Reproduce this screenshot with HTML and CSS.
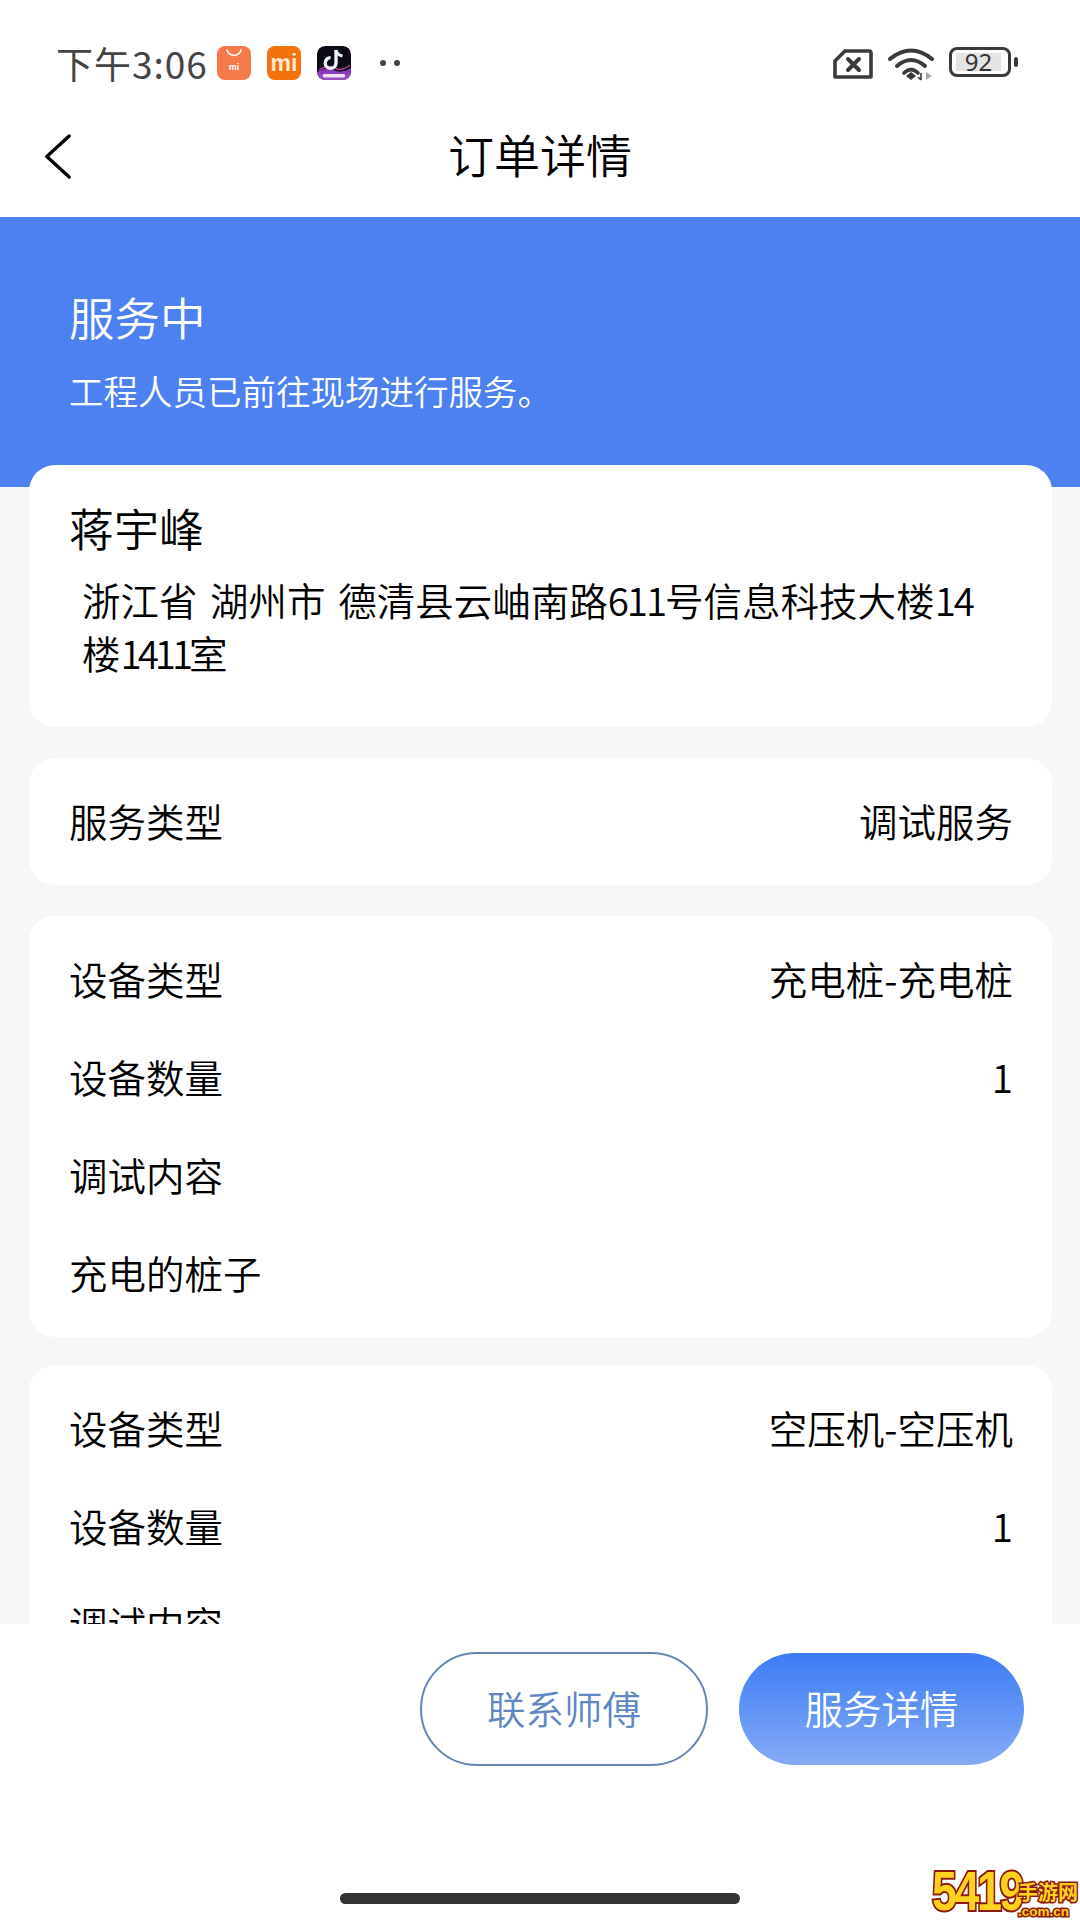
FILE: index.html
```html
<!DOCTYPE html>
<html lang="zh-CN">
<head>
<meta charset="utf-8">
<title>订单详情</title>
<link rel="stylesheet" href="styles.css">
</head>
<body>
<div class="page">
  <header class="statusbar">
    <div class="status-left">
      <span class="time">下午3:06</span>
      <div class="apps">
        <div class="app app-store">
          <svg class="store-arc" viewBox="0 0 16 8"><path d="M1 1 C3 8 13 8 15 1" fill="none" stroke="#fff" stroke-width="1.5" stroke-linecap="round"/></svg>
          <span class="store-mi">mi</span>
        </div>
        <div class="app app-mi"><span>mi</span></div>
        <svg class="app" viewBox="0 0 34 34">
          <defs><linearGradient id="tk" x1="0" y1="0" x2="0" y2="1"><stop offset="0" stop-color="#7b2fb8"/><stop offset="1" stop-color="#a04ec0"/></linearGradient></defs>
          <rect width="34" height="34" rx="8" fill="#0c0b16"/>
          <path d="M0 26 Q10 20 17 24 T34 22 V26 Q34 34 26 34 H8 Q0 34 0 26Z" fill="url(#tk)"/>
          <path d="M2 24 Q12 18 18 22 T33 19" fill="none" stroke="#d23aa8" stroke-width="1.2"/>
          <path d="M19 4 V17 A5.4 5.4 0 1 1 13.6 11.6" fill="none" stroke="#e8f4f4" stroke-width="3.4"/>
          <path d="M19 4 Q20 9 25.5 10" fill="none" stroke="#e8f4f4" stroke-width="3"/>
          <rect x="6" y="28" width="22" height="3.4" rx="1.2" fill="#efe2f5"/>
        </svg>
      </div>
      <div class="dots"><i></i><i></i></div>
    </div>
    <div class="status-right">
      <svg class="ic-sim" viewBox="0 0 40 30"><path d="M2 28 V12 L12 2 H36 Q38 2 38 4 V28 Z" fill="none" stroke="#3a3a3a" stroke-width="3.6" stroke-linejoin="round"/><path d="M15 10 L26 21 M26 10 L15 21" stroke="#3a3a3a" stroke-width="4" stroke-linecap="round"/></svg>
      <svg class="ic-wifi" viewBox="0 0 46 34"><g fill="none" stroke="#3a3a3a" stroke-width="4" stroke-linecap="round"><path d="M2 12 Q23 -5 44 12"/><path d="M9 19 Q23 7 37 19"/><path d="M16 26 Q23 19 30 26" stroke-width="3.6"/></g><path d="M18 29 L23 25 L28 29 L23 33Z" fill="#3a3a3a"/><path d="M33 26 V33 M33 33 L30 30" stroke="#3a3a3a" stroke-width="1.6" fill="none"/><path d="M38 25 V33 L44 29Z" fill="#a9a9a9"/></svg>
      <div class="battery">
        <div class="battery-body"><span class="battery-level">92</span></div>
        <i class="battery-nub"></i>
      </div>
    </div>
  </header>

  <nav class="navbar">
    <svg class="back" viewBox="0 0 30 48"><path d="M27 2 L3 24 L27 46" fill="none" stroke="#000" stroke-width="3.6" stroke-linecap="round" stroke-linejoin="round"/></svg>
    <h1 class="nav-title">订单详情</h1>
  </nav>

  <main class="content">
    <section class="hero">
      <h2 class="hero-title">服务中</h2>
      <p class="hero-sub">工程人员已前往现场进行服务。</p>
    </section>
    <div class="cards">
      <section class="card card-address">
        <div class="name">蒋宇峰</div>
        <p class="address">浙江省 湖州市 德清县云岫南路<span class="num">611</span>号信息科技大楼<span class="num">14</span>楼<span class="num-tight">1411</span>室</p>
      </section>
      <section class="card card-rows">
        <div class="row"><span>服务类型</span><span>调试服务</span></div>
      </section>
      <section class="card card-rows">
        <div class="row"><span>设备类型</span><span>充电桩-充电桩</span></div>
        <div class="row"><span>设备数量</span><span>1</span></div>
        <div class="row"><span>调试内容</span></div>
        <div class="row row-note"><span>充电的桩子</span></div>
      </section>
      <section class="card card-rows card-last">
        <div class="row"><span>设备类型</span><span>空压机-空压机</span></div>
        <div class="row"><span>设备数量</span><span>1</span></div>
        <div class="row"><span>调试内容</span></div>
        <div class="row row-note"><span>空压的机子</span></div>
      </section>
    </div>
  </main>

  <footer class="bottom">
    <div class="actions">
      <button class="btn btn-outline">联系师傅</button>
      <button class="btn btn-fill">服务详情</button>
    </div>
    <div class="home-indicator"></div>
    <div class="watermark">
      <span class="wm-big">5419</span>
      <span class="wm-side"><span class="wm-cn">手游网</span><span class="wm-en">.com.cn</span></span>
    </div>
  </footer>
</div>
</body>
</html>
```
FILE: styles.css
```css
* { box-sizing: border-box; }
html, body { margin: 0; padding: 0; }
body {
  font-family: "Noto Sans CJK SC", "Noto Sans", sans-serif;
  font-weight: 350;
  background: #fff;
  color: #000;
}
.page {
  width: 1080px;
  height: 1920px;
  display: flex;
  flex-direction: column;
  overflow: hidden;
  position: relative;
}

/* status bar */
.statusbar {
  height: 100px;
  flex: none;
  display: flex;
  justify-content: space-between;
  align-items: flex-start;
  padding: 44px 62px 0 56px;
  background: #fff;
}
.status-left { display: flex; align-items: center; height: 38px; }
.time { font-size: 37px; line-height: 36px; letter-spacing: 1px; color: #444; width: 161px; white-space: nowrap; font-weight: 400; }
.apps { display: flex; gap: 16px; }
.app {
  width: 34px;
  height: 34px;
  border-radius: 8px;
  display: flex;
  flex-direction: column;
  align-items: center;
  justify-content: center;
  overflow: hidden;
}
.app-store { background: #f6794a; justify-content: flex-start; padding-top: 3px; }
.store-arc { width: 16px; height: 8px; display: block; }
.store-mi { font: 700 9px/10px "Liberation Sans", sans-serif; color: #fff; margin-top: 5px; }
.app-mi { background: #f3720d; color: #ffe9cf; font: 700 23px/34px "Liberation Sans", sans-serif; }
.dots { display: flex; gap: 8px; margin-left: 29px; }
.dots i { width: 6px; height: 6px; border-radius: 50%; background: #444; display: block; }
.status-right { display: flex; align-items: flex-start; padding-top: 3px; }
.ic-sim { width: 40px; height: 30px; margin-top: 2px; }
.ic-wifi { width: 46px; height: 34px; margin-left: 15px; }
.battery { display: flex; align-items: center; margin-left: 15px; }
.battery-body {
  width: 62px;
  height: 30px;
  border: 3.5px solid #3a3a3a;
  border-radius: 8px;
  padding: 3px 4px;
  display: flex;
}
.battery-level {
  width: 45px;
  background: #e4e4e4;
  font: 24px/17px "Noto Sans", sans-serif;
  text-align: center;
  color: #333;
}
.battery-nub { width: 4px; height: 10px; border-radius: 2px; background: #3a3a3a; margin-left: 3px; display: block; }

/* nav */
.navbar {
  height: 117px;
  flex: none;
  display: flex;
  align-items: center;
  justify-content: center;
  position: relative;
  background: #fff;
}
.back { position: absolute; left: 44px; top: 33px; width: 28px; height: 47px; }
.nav-title { margin: 0 0 12px; font-size: 46px; font-weight: 350; line-height: 60px; }

/* content */
.content { flex: 1; min-height: 0; overflow: hidden; background: #f5f7f9; }
.hero {
  height: 270px;
  background: #4d80f0;
  color: #fff;
  padding: 69px 69px 0;
}
.hero-title { margin: 0; font-size: 45.5px; font-weight: 350; line-height: 60px; }
.hero-sub { margin: 22px 0 0; font-size: 34.5px; line-height: 44px; }
.cards {
  margin-top: -22px;
  padding: 0 28px 0 29px;
  display: flex;
  flex-direction: column;
  gap: 31px;
}
.card { background: #fff; border-radius: 26px; }
.card-last { margin-top: -3px; }
.card-address { height: 262px; padding: 33px 40px 0; }
.name { font-size: 45px; line-height: 60px; }
.address {
  margin: 15px 0 0;
  padding: 0 13px;
  font-size: 38.5px;
  line-height: 53px;
  word-spacing: 4px;
}
.num { letter-spacing: -2px; }
.num-tight { letter-spacing: -4px; }
.card-rows { padding: 16px 39px 13px 40px; }
.row {
  height: 98px;
  display: flex;
  justify-content: space-between;
  align-items: center;
  font-size: 38.5px;
  padding-bottom: 6px;
}

/* bottom */
.bottom {
  height: 296px;
  flex: none;
  background: #fff;
  position: relative;
  padding: 28px 56px 0 0;
}
.actions { display: flex; justify-content: flex-end; gap: 31px; }
.btn {
  height: 114px;
  border-radius: 57px;
  font-family: inherit;
  font-weight: 350;
  font-size: 38.5px;
  padding: 0 0 4px;
}
.btn-outline {
  width: 288px;
  background: #fff;
  border: 2px solid #6587b4;
  color: #5f87c4;
}
.btn-fill {
  width: 285px;
  border: 0;
  margin-top: 1px;
  height: 112px;
  color: #fff;
  background: linear-gradient(180deg, #3c7cf5 0%, #85abf6 100%);
}
.home-indicator {
  position: absolute;
  left: 340px;
  top: 269px;
  width: 400px;
  height: 11px;
  border-radius: 6px;
  background: #333;
}
.watermark {
  position: absolute;
  left: 930px;
  top: 243px;
  width: 150px;
  height: 53px;
  font-family: "Liberation Sans", sans-serif;
  font-weight: 700;
  color: #ffd21e;
  -webkit-text-stroke: 4px #8e1a0b;
  paint-order: stroke fill;
}
.wm-big {
  position: absolute;
  left: 2px;
  top: -4px;
  font-size: 56px;
  line-height: 56px;
  letter-spacing: -3px;
  white-space: nowrap;
  transform: scaleX(.8);
  transform-origin: left center;
}
.wm-side {
  position: absolute;
  left: 88px;
  top: 13px;
  width: 62px;
  display: flex;
  flex-direction: column;
  align-items: flex-start;
  white-space: nowrap;
}
.wm-cn { font: 700 20px/24px "Noto Sans CJK SC", sans-serif; -webkit-text-stroke: 3px #8e1a0b; paint-order: stroke fill; }
.wm-en { font-size: 13.5px; line-height: 15px; -webkit-text-stroke: 3px #8e1a0b; paint-order: stroke fill; }
```
